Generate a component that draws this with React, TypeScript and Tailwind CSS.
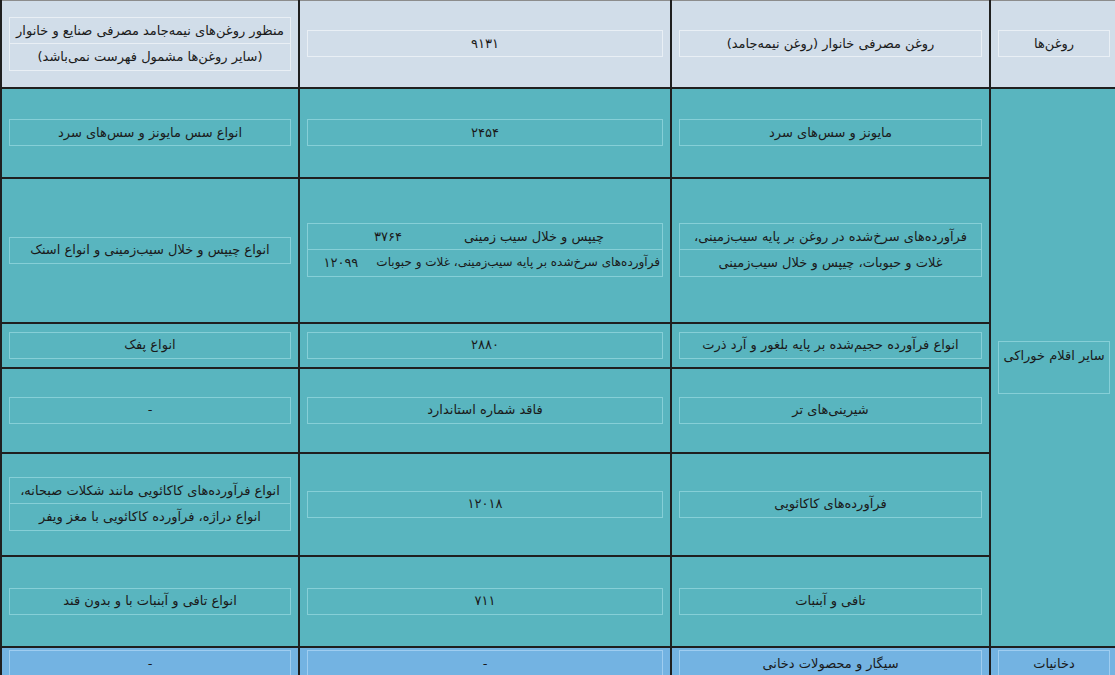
import React from 'react'

type Line = string | { text: string; num: string; pr: string; gap: string; size?: string }

function Box({ lines, tone, tall }: { lines: Line[]; tone: 'head' | 'teal' | 'blue'; tall?: boolean }) {
  const border =
    tone === 'head' ? 'border-[#e9eff5]' : tone === 'teal' ? 'border-[#86cfd7]' : 'border-[#9fcdf0]'
  return (
    <div className="flex flex-col">
      {lines.map((l, i) => (
        <div
          key={i}
          className={`flex h-[27px] items-center overflow-hidden whitespace-nowrap border ${border} ${i > 0 ? 'border-t-0' : ''} ${
            tall ? 'h-[53px] items-start pt-[4px]' : ''
          } ${typeof l === 'string' ? 'justify-center' : 'justify-start'}`}
        >
          {typeof l === 'string' ? (
            <span>{l}</span>
          ) : (
            <div className={`flex ${l.pr} ${l.gap} ${l.size ?? ''}`}>
              <span>{l.text}</span>
              <span className="text-[13px]">{l.num}</span>
            </div>
          )}
        </div>
      ))}
    </div>
  )
}

const rows: { h: string; cells: Line[][] }[] = [
  {
    h: 'h-[90px]',
    cells: [['مایونز و سس‌های سرد'], ['۲۴۵۴'], ['انواع سس مایونز و سس‌های سرد']],
  },
  {
    h: 'h-[145px]',
    cells: [
      ['فرآورده‌های سرخ‌شده در روغن بر پایه سیب‌زمینی،', 'غلات و حبوبات، چیپس و خلال سیب‌زمینی'],
      [
        { text: 'چیپس و خلال سیب زمینی', num: '۳۷۶۴', pr: 'pr-[58px]', gap: 'gap-[62px]' },
        {
          text: 'فرآورده‌های سرخ‌شده بر پایه سیب‌زمینی، غلات و حبوبات',
          num: '۱۲۰۹۹',
          pr: 'pr-[2px]',
          gap: 'gap-[18px]',
          size: 'text-[12px]',
        },
      ],
      ['انواع چیپس و خلال سیب‌زمینی و انواع اسنک'],
    ],
  },
  {
    h: 'h-[45px]',
    cells: [['انواع فرآورده حجیم‌شده بر پایه بلغور و آرد ذرت'], ['۲۸۸۰'], ['انواع پفک']],
  },
  {
    h: 'h-[85px]',
    cells: [['شیرینی‌های تر'], ['فاقد شماره استاندارد'], ['-']],
  },
  {
    h: 'h-[103px]',
    cells: [
      ['فرآورده‌های کاکائویی'],
      ['۱۲۰۱۸'],
      ['انواع فرآورده‌های کاکائویی مانند شکلات صبحانه،', 'انواع دراژه، فرآورده کاکائویی با مغز ویفر'],
    ],
  },
  {
    h: 'h-[91px]',
    cells: [['تافی و آبنبات'], ['۷۱۱'], ['انواع تافی و آبنبات با و بدون قند']],
  },
]

const td = 'border-2 border-[#1f1f1f] px-[7px] align-middle'

export default function App() {
  return (
    <div className="h-[675px] w-[1115px] overflow-hidden bg-white">
      <table
        dir="rtl"
        className="w-[1117px] table-fixed border-collapse text-[13px] text-[#1a1a1a] [font-family:'DejaVu_Sans',sans-serif]"
      >
        <colgroup>
          <col className="w-[128px]" />
          <col className="w-[319px]" />
          <col className="w-[372px]" />
          <col className="w-[298px]" />
        </colgroup>
        <tbody>
          <tr className="h-[87px] bg-[#d1dde9]">
            <td className={`${td} border-t-[#8c8c8c] border-t`}>
              <Box tone="head" lines={['روغن‌ها']} />
            </td>
            <td className={`${td} border-t-[#8c8c8c] border-t`}>
              <Box tone="head" lines={['روغن مصرفی خانوار (روغن نیمه‌جامد)']} />
            </td>
            <td className={`${td} border-t-[#8c8c8c] border-t`}>
              <Box tone="head" lines={['۹۱۳۱']} />
            </td>
            <td className={`${td} border-t-[#8c8c8c] border-t`}>
              <Box
                tone="head"
                lines={['منظور روغن‌های نیمه‌جامد مصرفی صنایع و خانوار', '(سایر روغن‌ها مشمول فهرست نمی‌باشد)']}
              />
            </td>
          </tr>
          {rows.map((r, i) => (
            <tr key={i} className={`${r.h} bg-[#59b5bf]`}>
              {i === 0 && (
                <td rowSpan={6} className={td}>
                  <Box tone="teal" tall lines={['سایر اقلام خوراکی']} />
                </td>
              )}
              {r.cells.map((c, j) => (
                <td key={j} className={td}>
                  <Box tone="teal" lines={c} />
                </td>
              ))}
            </tr>
          ))}
          <tr className="h-[34px] bg-[#73b3e2]">
            <td className={td}>
              <Box tone="blue" lines={['دخانیات']} />
            </td>
            <td className={td}>
              <Box tone="blue" lines={['سیگار و محصولات دخانی']} />
            </td>
            <td className={td}>
              <Box tone="blue" lines={['-']} />
            </td>
            <td className={td}>
              <Box tone="blue" lines={['-']} />
            </td>
          </tr>
        </tbody>
      </table>
    </div>
  )
}
